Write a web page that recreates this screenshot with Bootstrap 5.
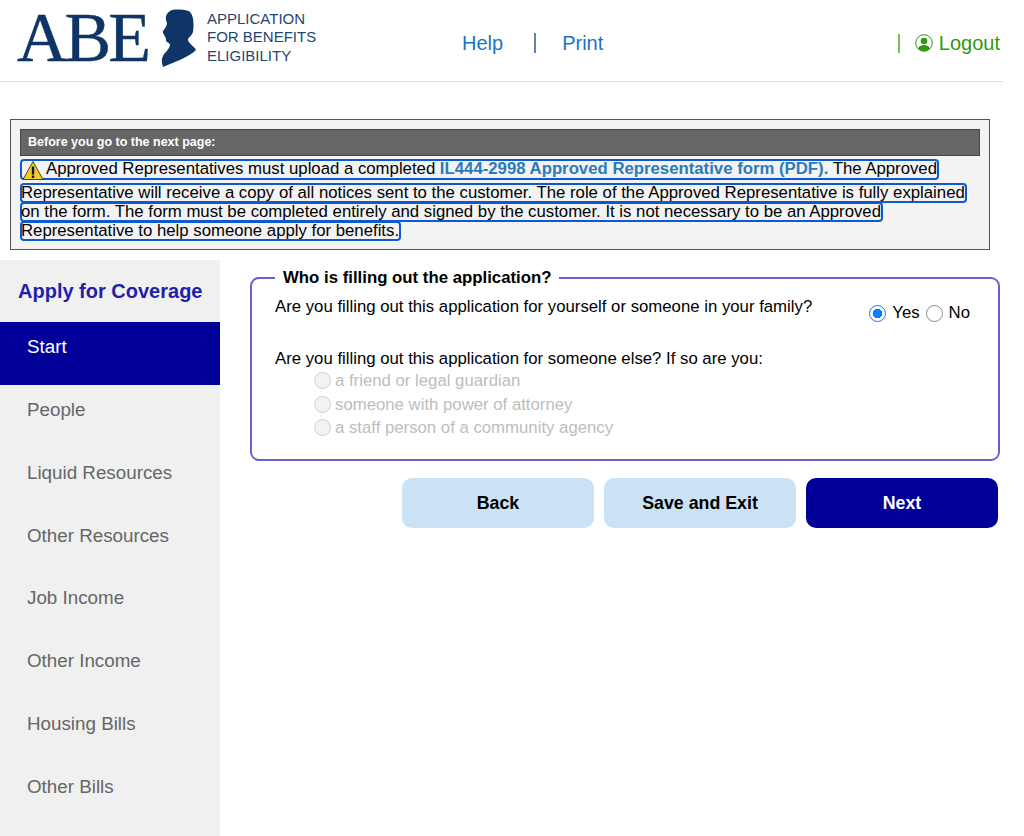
<!DOCTYPE html>
<html lang="en">
<head>
    <meta charset="UTF-8">
    <meta name="viewport" content="width=device-width, initial-scale=1.0">
    <title>ABE - Apply for Coverage</title>
    <link href="https://cdn.jsdelivr.net/npm/bootstrap@5.3.0/dist/css/bootstrap.min.css" rel="stylesheet">
    <style>
        html, body { height: 100%; }
        body {
            font-family: "Liberation Sans", Arial, sans-serif;
            color: #000;
            background: #fff;
            overflow: hidden;
        }
        .page-wrap { height: 836px; }

        /* header */
        .abe-header {
            width: 1003px;
            height: 82px;
            border-bottom: 1px solid #ddd;
            padding-top: 8px;
        }
        .abe-word {
            font-family: "Liberation Serif", "Times New Roman", serif;
            font-size: 70px;
            line-height: 60px;
            letter-spacing: -3px;
            -webkit-text-stroke: 0.4px #0f3566;
            color: #0f3566;
            margin-left: 17px;
            width: 143px;
        }
        .abe-head { width: 38px; height: 60px; flex-shrink: 0; }
        .abe-tag {
            font-size: 15px;
            line-height: 18.3px;
            color: #25466f;
            margin-left: 9px;
            width: 255px;
            padding-top: 2px;
        }
        .top-links { font-size: 20px; height: 70px; }
        .top-links a { text-decoration: none; color: #1a73c4; }
        .top-sep { width: 2px; height: 20px; background: #5f86ad; margin: 0 26px 0 31px; }
        .logout-wrap { margin-left: auto; margin-right: 3px; color: #2e9a0c; font-size: 20px; height: 70px; }
        .logout-wrap a { text-decoration: none; color: #2e9a0c; }
        .logout-sep { width: 2px; height: 19px; background: #79bd62; margin-right: 15px; }
        .logout-icon { margin-right: 6px; }

        /* notice box */
        .notice-box {
            width: 980px;
            height: 131px;
            margin: 37px 0 10px 10px;
            padding: 9px;
            background: #f3f3f3;
            border: 1px solid #555;
        }
        .notice-head {
            height: 27px;
            line-height: 25px;
            padding-left: 7px;
            background: #666;
            border: 1px solid #444;
            color: #fff;
            font-size: 12.5px;
            font-weight: 700;
        }
        .focus-line {
            display: block;
            width: fit-content;
            font-size: 16.75px;
            line-height: 16px;
            white-space: nowrap;
            border: 2px solid #0c5ad2;
            border-radius: 4px;
            margin-top: -1px;
            text-indent: -1px;
        }
        .focus-line.first { margin-top: 3px; margin-bottom: 4px; padding: 0 0 1px 25px; position: relative; }
        .warn-icon { position: absolute; left: 0; top: -1px; width: 22px; height: 21px; }
        .focus-line a { color: #2a7bbd; font-weight: 700; text-decoration: none; }

        /* side menu */
        .side-menu { width: 220px; flex-shrink: 0; background: #f0f0f0; height: 577px; }
        .side-title {
            color: #1f1fa8;
            font-size: 20px;
            font-weight: 700;
            height: 62px;
            line-height: 62px;
            padding-left: 18px;
            margin: 0;
        }
        .side-item {
            display: block;
            height: 62.85px;
            padding: 13px 0 0 27px;
            font-size: 18.8px;
            line-height: 24px;
            color: #666;
            text-decoration: none;
        }
        .side-item.on { background: #000099; color: #fff; }

        /* form area */
        .form-area { width: 750px; margin-left: 30px; padding-top: 9px; }
        .who-box {
            height: 192px;
            padding: 0 23px;
            border: 2px solid #6464c8;
            border-radius: 9px;
        }
        .who-box legend {
            float: none;
            width: auto;
            margin: 0;
            padding: 0 8px;
            font-size: 16.8px;
            font-weight: 700;
            line-height: 18px;
        }
        .q-text { font-size: 16.75px; line-height: 20px; margin: 0; }
        .q-row { padding-top: 10px; height: 62px; }
        .yes-no { font-size: 16.75px; line-height: 20px; gap: 6px; margin: 6px 5px 0 0; }
        .yes-no label { display: inline-flex; align-items: center; }

        input[type=radio] {
            appearance: none;
            width: 17px;
            height: 17px;
            margin: 0 4px 0 0;
            border: 1px solid #8a8a8a;
            border-radius: 50%;
            background: #fff;
        }
        .yes-no input[type=radio] { margin-right: 6px; }
        input[type=radio]:checked {
            border: 1.5px solid #0a7cff;
            background: radial-gradient(circle, #0a7cff 0 4.5px, #fff 5px);
        }
        input[type=radio]:disabled { border-color: #cfcfcf; background: #f2f2f2; }

        .opt-line {
            display: flex;
            align-items: center;
            height: 23.5px;
            padding-left: 39px;
            font-size: 16.75px;
            color: #bdbdbd;
        }

        .btn-row { margin: 17px 2px 0 0; gap: 10px; }
        .btn-abe {
            width: 192px;
            height: 50px;
            border: 0;
            border-radius: 10px;
            font-size: 17.8px;
            font-weight: 700;
        }
        .btn-soft { background: #cbe2f5; color: #000; }
        .btn-navy { background: #000099; color: #fff; }
    </style>
</head>
<body>
    <div class="page-wrap">
        <!-- top bar -->
        <div class="abe-header d-flex">
            <div class="abe-word">ABE</div>
            <svg class="abe-head" viewBox="160 8 38 60" aria-hidden="true">
                <path fill="#0f3566" d="M170 11 C173 9 186 9 190 12 C194 16 194 26 193 32 C192 36 188 37 188 40 C189 44 194 46 196 50 C192 54 187 56 182 59 C176 62 169 64 163 67 C162 63 161 60 163 56 C165 52 169 50 170 45 C170 43 168 43 167 42 C165 41 167 38 165 37 C165 35 162 33 163 31 C165 28 167 26 167 23 C166 20 164 15 170 11 Z"/>
            </svg>
            <div class="abe-tag">APPLICATION<br>FOR BENEFITS<br>ELIGIBILITY</div>
            <div class="top-links d-flex align-items-center">
                <a href="#">Help</a>
                <span class="top-sep"></span>
                <a href="#">Print</a>
            </div>
            <div class="logout-wrap d-flex align-items-center">
                <span class="logout-sep"></span>
                <svg class="logout-icon" width="18" height="18" viewBox="0 0 18 18" aria-hidden="true">
                    <circle cx="9" cy="9" r="8.3" fill="#fff" stroke="#2e9a0c" stroke-width="1"/>
                    <circle cx="9" cy="7" r="3.3" fill="#2e9a0c"/>
                    <path fill="#2e9a0c" d="M3 14.5 C4 11.8 7 11 9 11 C11 11 14 11.8 15 14.5 C13.5 16.3 11.3 17 9 17 C6.7 17 4.5 16.3 3 14.5 Z"/>
                </svg>
                <a href="#">Logout</a>
            </div>
        </div>

        <!-- notice -->
        <div class="notice-box">
            <div class="notice-head">Before you go to the next page:</div>
            <span class="focus-line first">
                <svg class="warn-icon" viewBox="0 0 22 21" aria-hidden="true">
                    <path fill="#f2cd2c" stroke="#4a4a1a" stroke-width="1" stroke-linejoin="round" d="M11 1.5 L21 19.5 L1 19.5 Z"/>
                    <rect x="9.8" y="6.5" width="2.4" height="8" fill="#111"/>
                    <rect x="9.8" y="15.5" width="2.4" height="2.4" fill="#111"/>
                </svg>
                Approved Representatives must upload a completed <a href="#">IL444-2998 Approved Representative form (PDF).</a> The Approved
            </span>
            <span class="focus-line">Representative will receive a copy of all notices sent to the customer. The role of the Approved Representative is fully explained</span>
            <span class="focus-line">on the form. The form must be completed entirely and signed by the customer. It is not necessary to be an Approved</span>
            <span class="focus-line">Representative to help someone apply for benefits.</span>
        </div>

        <div class="d-flex">
            <!-- side menu -->
            <nav class="side-menu">
                <h2 class="side-title">Apply for Coverage</h2>
                <a class="side-item on" href="#">Start</a>
                <a class="side-item" href="#">People</a>
                <a class="side-item" href="#">Liquid Resources</a>
                <a class="side-item" href="#">Other Resources</a>
                <a class="side-item" href="#">Job Income</a>
                <a class="side-item" href="#">Other Income</a>
                <a class="side-item" href="#">Housing Bills</a>
                <a class="side-item" href="#">Other Bills</a>
            </nav>

            <!-- form -->
            <div class="form-area">
                <fieldset class="who-box">
                    <legend>Who is filling out the application?</legend>
                    <div class="q-row d-flex justify-content-between align-items-start">
                        <p class="q-text">Are you filling out this application for yourself or someone in your family?</p>
                        <div class="yes-no d-flex">
                            <label><input type="radio" name="self" checked>Yes</label>
                            <label><input type="radio" name="self">No</label>
                        </div>
                    </div>
                    <p class="q-text">Are you filling out this application for someone else? If so are you:</p>
                    <div>
                        <label class="opt-line"><input type="radio" name="other" disabled>a friend or legal guardian</label>
                        <label class="opt-line"><input type="radio" name="other" disabled>someone with power of attorney</label>
                        <label class="opt-line"><input type="radio" name="other" disabled>a staff person of a community agency</label>
                    </div>
                </fieldset>
                <div class="btn-row d-flex justify-content-end">
                    <button type="button" class="btn btn-abe btn-soft">Back</button>
                    <button type="button" class="btn btn-abe btn-soft">Save and Exit</button>
                    <button type="button" class="btn btn-abe btn-navy">Next</button>
                </div>
            </div>
        </div>
    </div>

    <script src="https://cdn.jsdelivr.net/npm/bootstrap@5.3.0/dist/js/bootstrap.bundle.min.js"></script>
</body>
</html>
